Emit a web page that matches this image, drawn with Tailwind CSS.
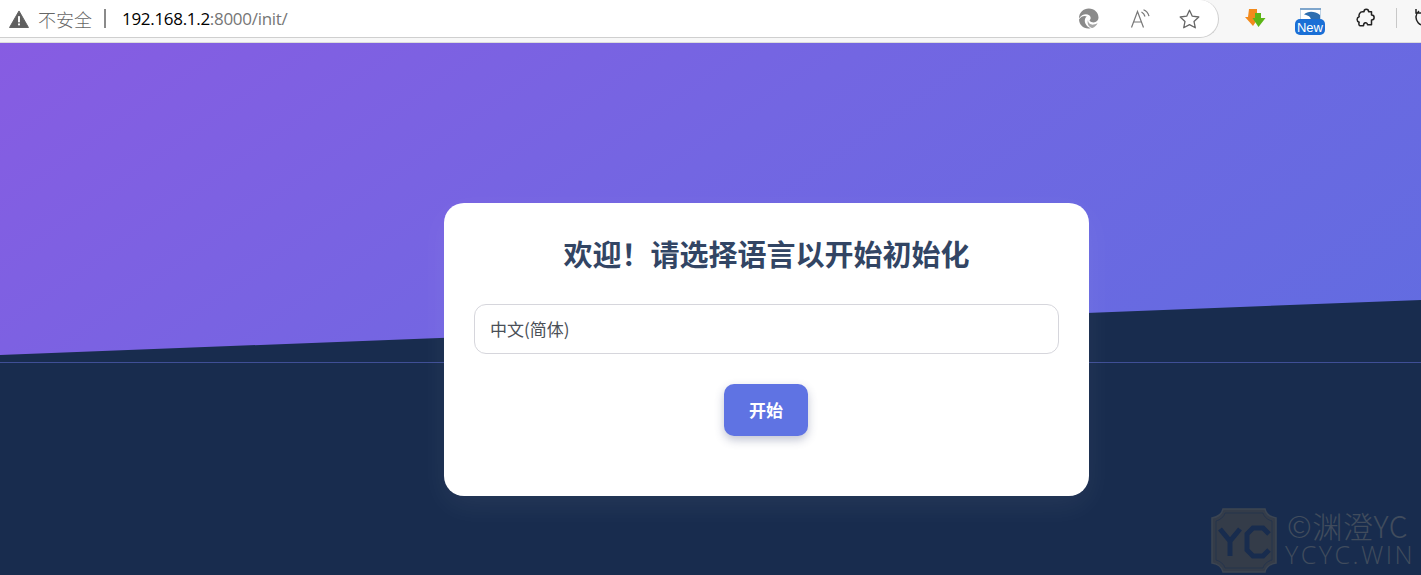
<!DOCTYPE html>
<html lang="zh-CN">
<head>
    <meta charset="UTF-8">
    <meta name="viewport" content="width=device-width, initial-scale=1.0">
    <title>初始化</title>
    <script src="https://cdn.jsdelivr.net/npm/@tailwindcss/browser@4"></script>
</head>
<body class="h-[575px] overflow-hidden bg-[#182c4e] font-['Noto_Sans_CJK_SC','Noto_Sans',sans-serif]">

    <!-- browser toolbar -->
    <header class="h-[43px] flex items-start bg-[#f7f7f7] border-b border-[#dcdcdc] overflow-hidden">
        <div class="w-[1221px] h-[38px] shrink-0 -ml-[2px] flex items-center bg-white border-b-[1.5px] border-r-[1.5px] border-[#cfcfcf] rounded-br-[20px] rounded-tr-[20px]">
            <svg class="ml-[11px] w-[20px] h-[18px] shrink-0" viewBox="0 0 21 19">
                <path d="M10.5 1 L20.5 18.5 H0.5 Z" fill="#5f5f5f" stroke="#5f5f5f" stroke-linejoin="round" stroke-width="1"/>
                <rect x="9.5" y="6.5" width="2" height="6.5" fill="#fff"/>
                <rect x="9.5" y="14.2" width="2" height="2" fill="#fff"/>
            </svg>
            <span class="ml-[9px] text-[18px] leading-none font-light text-[#666]">不安全</span>
            <span class="ml-[12px] w-[2px] h-[19px] bg-[#8a8a8a]"></span>
            <span class="ml-[16px] text-[17px] leading-none font-['Open_Sans',sans-serif] tracking-[-0.3px] text-black">192.168.1.2<span class="text-[#767676]">:8000/init/</span></span>
            <div class="ml-auto flex items-center gap-[29px] pr-[18px]">
                <!-- edge -->
                <svg class="mr-[2px] w-[21px] h-[21px]" viewBox="0 0 21 21">
                    <path d="M1 10.5 C1 4.5 5.5 .6 10.8 .6 C16.5 .6 20.5 4.8 20.5 9.6 C20.5 12.6 18.2 14.4 15.6 14.4 C13.8 14.4 12.4 13.8 11.8 13 C11.3 12.3 11.8 11.9 12.3 11.3 C13 10.4 12.8 8.4 11.2 7.2 C8.4 5.2 3.4 6.2 1 10.5 Z" fill="#8a8a8a"/>
                    <path d="M1 11.5 C3 8 7 7.4 8.8 8.6 C6.8 10 6.2 13 7.4 15.6 C8.2 17.4 9.8 19.4 12.6 20.2 C6 21.6 1.2 17 1 11.5 Z" fill="#8a8a8a"/>
                    <path d="M10 12 C10 15.4 13 17 15.6 16.6 C17.4 16.3 18.6 15.6 19.6 15 C18.6 17.4 16.8 19.2 14.4 20 C11 19.6 8.6 15.6 10 12 Z" fill="#a6a6a6"/>
                </svg>
                <!-- read aloud -->
                <svg class="w-[20px] h-[20px]" viewBox="0 0 20 20" fill="none" stroke="#777" stroke-width="1.2">
                    <path d="M1.5 18.5 L7.5 2.5 L13.5 18.5 M3.6 13 H11.4"/>
                    <path d="M11.5 3 C13.5 4 14.5 5.5 15 7.5 M13.5 .8 C16.5 2 18.2 4.2 19 7.2"/>
                </svg>
                <!-- favourite -->
                <svg class="w-[21px] h-[20px]" viewBox="0 0 21 20" fill="none" stroke="#666" stroke-width="1.3" stroke-linejoin="round">
                    <path d="M10.5 1.2 L13.3 7.2 L19.8 8 L15 12.4 L16.3 18.8 L10.5 15.6 L4.7 18.8 L6 12.4 L1.2 8 L7.7 7.2 Z"/>
                </svg>
            </div>
        </div>
        <div class="relative flex-1 h-full">
            <!-- downloader arrows -->
            <svg class="absolute left-[26px] top-[9px] w-[21px] h-[18px]" viewBox="0 0 21 18">
                <path d="M4 0 H12 V7 L14 8 L8 17 L0 8 H3 Z" fill="#f28a1c"/>
                <path d="M10 4 H16 V9 H20.5 L13.5 18 L7.5 9 H10 Z" fill="#5cb516"/>
            </svg>
            <!-- new extension -->
            <div class="absolute left-[76px] top-[8px] w-[30px] h-[28px] flex flex-col items-center">
                <svg class="w-[21px] h-[12px]" viewBox="0 0 21 12">
                    <rect width="21" height="12" fill="#fff"/>
                    <rect width="21" height="2" fill="#7fa6cc"/>
                    <path d="M4 6.5 C8 2.5 15 3 20 7 V12 H11 C11 9 8 7 4 6.5 Z" fill="#2f6fb0"/>
                    <path d="M0 2 V12 M21 2 V12" stroke="#7fa6cc" stroke-width="1"/>
                </svg>
                <span class="-mt-[1px] w-[30px] h-[16px] flex items-center justify-center rounded-[5px] bg-[#1a6fd6] text-white text-[13px] leading-none font-['Liberation_Sans',sans-serif]">New</span>
            </div>
            <!-- extensions puzzle -->
            <svg class="absolute left-[137px] top-[8px] w-[20px] h-[20px]" viewBox="0 0 20 20" fill="none" stroke="#222" stroke-width="1.5" stroke-linejoin="round">
                <path d="M6.5 3.8 H8 C8 0.4 12.6 0.4 12.6 3.8 H15.5 V7 C19 7 19 12 15.5 12 V16.8 H11.5 C11.5 14 7.5 14 7.5 17.8 H4 C2.8 17.8 2.6 15.4 3.2 14.2 C0.4 13.4 0.4 9.6 3.2 8.8 C2.4 6.8 3.8 3.8 6.5 3.8 Z"/>
            </svg>
            <span class="absolute left-[177px] top-[8px] w-[1px] h-[20px] bg-[#c8c8c8]"></span>
            <!-- reload, cut off by the window edge -->
            <svg class="absolute left-[196px] top-[8px] w-[18px] h-[20px]" viewBox="0 0 18 20" fill="none" stroke="#222" stroke-width="1.5">
                <path d="M4 3 A8 8 0 1 0 14 3 M1 1 V5 H6"/>
            </svg>
        </div>
    </header>

    <main class="relative h-[532px] pl-[444px] pt-[160px] overflow-hidden">
        <!-- slanted gradient backdrop -->
        <div class="absolute inset-0 bg-linear-[145deg] from-[#875ce2] via-[#7366e2] via-40% to-[#5c6ee0] [clip-path:polygon(0_0,100%_0,100%_257px,0_312px)]"></div>
        <div class="absolute left-0 right-0 top-[319px] h-px bg-[#3f4f96]"></div>

        <section class="relative w-[645px] h-[293px] px-[30px] pt-[29px] bg-white rounded-[20px] shadow-[0_10px_30px_rgba(255,255,255,0.06)]">
            <h1 class="h-[43px] text-center text-[29px] leading-[43px] font-bold whitespace-nowrap text-[#324564]">欢迎！请选择语言以开始初始化</h1>
            <div class="mt-[29px] h-[50px] flex items-center px-[15px] border border-[#d6d6dc] rounded-[12px] text-[17px] text-[#4a4f57]">中文(简体)</div>
            <div class="mt-[30px] flex justify-center pr-px">
                <button class="w-[84px] h-[52px] rounded-[10px] bg-[#5f73e3] text-white text-[17px] font-bold shadow-[0_4px_10px_rgba(50,60,110,0.3)]">开始</button>
            </div>
        </section>

        <!-- watermark -->
        <div class="absolute left-[1211px] top-[465px] flex items-start gap-[9px]">
            <svg class="w-[66px] h-[65px] shrink-0" viewBox="0 0 66 65">
                <path d="M12 1 H54 C55 6 59 9 65 10 V55 C59 56 55 59 54 64 H12 C11 59 7 56 1 55 V10 C7 9 11 6 12 1 Z" fill="#343c49" stroke="#3c4552" stroke-width="1.5"/>
                <path d="M14 5 H52 C53 9 57 12 61 13 V52 C57 53 53 56 52 60 H14 C13 56 9 53 5 52 V13 C9 12 13 9 14 5 Z" fill="none" stroke="#25344d" stroke-width="1"/>
                <path d="M9 21 L19 33 L29 21 M19 33 V48" fill="none" stroke="#182c4e" stroke-width="5"/>
                <path d="M58 26 L52 20 H42 L36 26 V42 L42 48 H52 L58 42" fill="none" stroke="#182c4e" stroke-width="5"/>
            </svg>
            <div class="-ml-[1px] pt-[2px] text-[#414c5d] font-['Open_Sans',sans-serif] font-light leading-none whitespace-nowrap">
                <div class="pl-[2px] text-[30px] h-[32px] tracking-[0.6px] font-['Noto_Sans_CJK_SC',sans-serif]">©渊澄YC</div>
                <div class="text-[25px] tracking-[2.5px]">YCYC.WIN</div>
            </div>
        </div>
    </main>

</body>
</html>
